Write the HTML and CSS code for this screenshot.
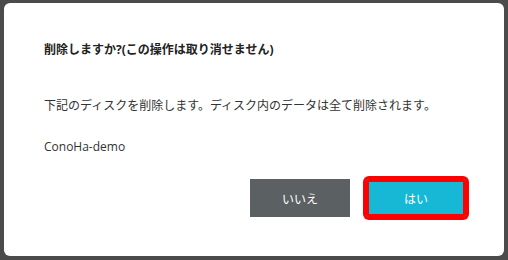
FILE: index.html
```html
<!DOCTYPE html>
<html lang="ja">
<head>
<meta charset="utf-8">
<title>削除確認</title>
<link rel="stylesheet" href="styles.css">
</head>
<body>
<div class="modal">
  <p class="title">削除しますか?(この操作は取り消せません)</p>
  <p class="message">下記のディスクを削除します。ディスク内のデータは全て削除されます。</p>
  <p class="target">ConoHa-demo</p>
  <div class="actions">
    <button class="btn btn-no">いいえ</button>
    <button class="btn btn-yes">はい</button>
  </div>
</div>
</body>
</html>
```
FILE: styles.css
```css
html, body {
  margin: 0;
  padding: 0;
}
body {
  background: #4b4b4b;
  width: 508px;
  height: 260px;
  overflow: hidden;
  font-family: "Open Sans", "Noto Sans CJK JP", sans-serif;
  font-size: 12px;
  color: #333;
}
.modal {
  margin: 3px 4px 0 4px;
  width: 500px;
  height: 253px;
  box-sizing: border-box;
  background: #fff;
  border-radius: 6px;
  padding: 37px 0 0 40px;
}
.modal p {
  margin: 0;
  line-height: 20px;
}
.title {
  font-weight: bold;
  color: #222;
}
.message {
  margin-top: 36px !important;
}
.target {
  margin-top: 21px !important;
}
.actions {
  display: flex;
  justify-content: flex-end;
  gap: 16px;
  margin-top: 22px;
  padding-right: 38px;
}
.btn {
  width: 100px;
  height: 38px;
  border: none;
  border-radius: 0;
  color: #fff;
  font-family: "Noto Sans CJK JP", sans-serif;
  font-size: 12px;
  padding: 0;
}
.btn-no {
  background: #5b6163;
}
.btn-yes {
  background: #16b8d6;
  border-radius: 3px;
  box-shadow: inset 0 0 0 3px #ff0000, 0 0 0 3px #ff0000;
}
```
